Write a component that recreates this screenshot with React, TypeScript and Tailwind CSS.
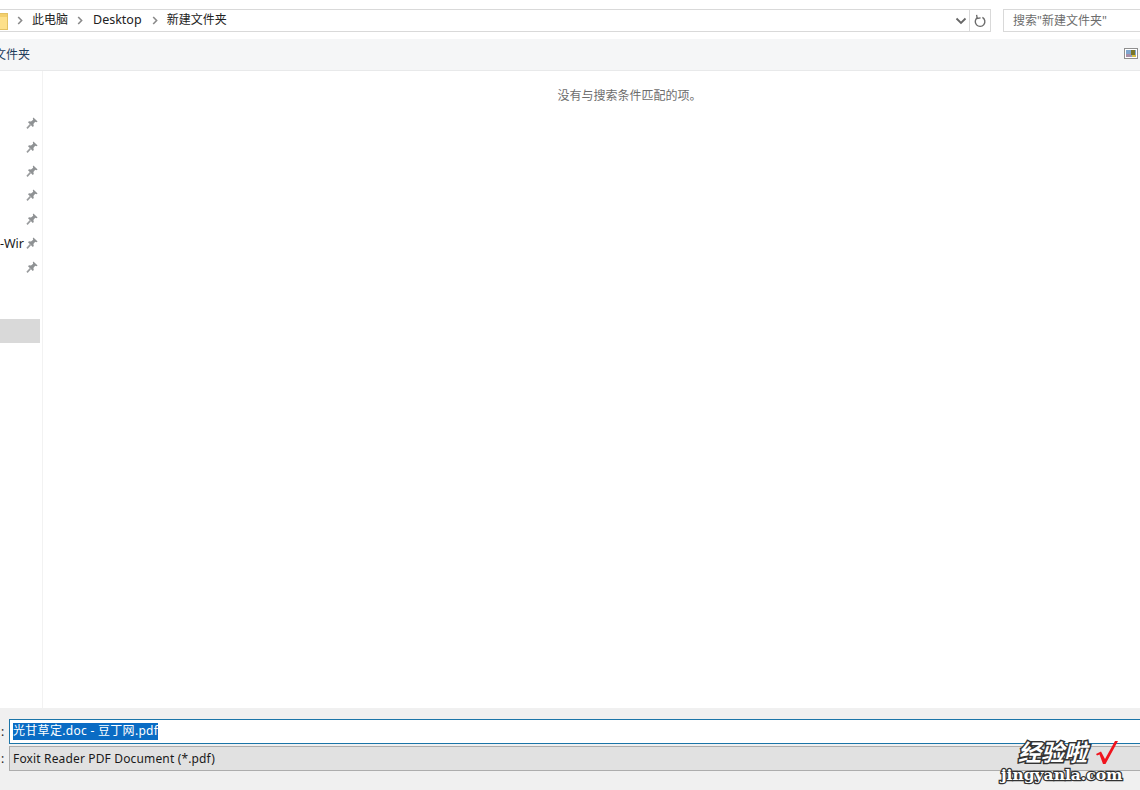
const cjk = "font-['Noto_Sans','Noto_Sans_CJK_SC',sans-serif]";

function Chevron() {
  return (
    <svg width="6" height="9" viewBox="0 0 6 9" className="shrink-0">
      <path d="M1.2 1 L4.6 4.5 L1.2 8" fill="none" stroke="#8a8a8a" strokeWidth="1.6" />
    </svg>
  );
}

function Pin() {
  return (
    <svg width="12" height="12" viewBox="0 0 12 12" className="shrink-0">
      <path d="M7.4 0.4 L11.6 4.4 L10.4 5.2 L9.2 4.8 L7.4 7 L7.8 9 L6.8 10 L2 5.2 L3 4.2 L5 4.6 L7.2 2.8 L6.8 1.4 Z" fill="#8f9294" />
      <path d="M4.4 7.6 L1 11.4" stroke="#9a9c9e" strokeWidth="1.6" fill="none" />
    </svg>
  );
}

function Row({ text }: { text?: string }) {
  return (
    <div className="h-6 flex items-center justify-end pr-[2px]">
      {text && <span className="text-[12.5px] text-[#1a1a1a] mr-[2px] leading-[15px] whitespace-nowrap shrink-0">{text}</span>}
      <Pin />
    </div>
  );
}

export default function App() {
  return (
    <div className={`w-[1140px] h-[790px] relative overflow-hidden flex flex-col bg-white text-[12px] ${cjk}`}>
      {/* address row */}
      <div className="h-[39px] shrink-0 flex items-start pt-[9px] bg-white">
        <div className="w-[991px] h-[23px] border-y border-r border-[#d9d9d9] flex items-center">
          <svg width="8" height="17" viewBox="0 0 8 17" className="shrink-0 mt-[2px]">
            <rect x="-1" y="0.5" width="8.5" height="16" fill="#fde08a" stroke="#e3c163" />
            <rect x="0" y="1" width="7" height="3" fill="#f3cf6b" />
          </svg>
          <div className="ml-[9px]"><Chevron /></div>
          <span className="ml-[9px] text-[#222] -translate-y-[1px]">此电脑</span>
          <div className="ml-[9px]"><Chevron /></div>
          <span className="ml-[10px] text-[#222] text-[12.5px]">Desktop</span>
          <div className="ml-[10px]"><Chevron /></div>
          <span className="ml-[9px] text-[#222] -translate-y-[1px]">新建文件夹</span>
          <div className="flex-1" />
          <svg width="12" height="8" viewBox="0 0 12 8" className="shrink-0 mr-[2px]">
            <path d="M1.5 1.5 L6 6 L10.5 1.5" fill="none" stroke="#666" strokeWidth="1.8" />
          </svg>
          <div className="w-[21px] h-full border-l border-[#d9d9d9] flex items-center justify-center">
            <svg width="12" height="14" viewBox="0 0 12 14">
              <path d="M3.4 3.6 A4.8 4.8 0 1 0 8.4 3.4" fill="none" stroke="#6b6b6b" strokeWidth="1.4" />
              <path d="M2.6 0.8 L3.2 4.4 L6.6 3.8" fill="none" stroke="#6b6b6b" strokeWidth="1.3" />
            </svg>
          </div>
        </div>
        <div className="ml-[12px] flex-1 h-[23px] border-y border-l border-[#d9d9d9] flex items-center pl-[9px] text-[#6d6d6d]">
          <span>搜索"新建文件夹"</span>
        </div>
      </div>

      {/* toolbar */}
      <div className="h-[32px] shrink-0 bg-[#f5f6f7] border-b border-[#e8e9ea] flex items-center justify-between overflow-hidden">
        <span className="-ml-[30px] text-[#1f3d5c]">新建文件夹</span>
        <svg width="14" height="11" viewBox="0 0 14 11" className="mr-[2px] mb-[3px] shrink-0">
          <rect x="0.5" y="0.5" width="13" height="10" fill="#fff" stroke="#8f8f8f" />
          <rect x="2" y="2" width="10" height="7" fill="#7fa6cf" />
          <rect x="7" y="2" width="4" height="5" fill="#7a7628" />
          <rect x="2" y="6" width="5" height="3" fill="#a78fa8" />
          <rect x="8" y="7" width="4" height="2" fill="#d8c04a" />
        </svg>
      </div>

      {/* main */}
      <div className="flex-1 flex min-h-0">
        <div className="w-[43px] shrink-0 border-r border-[#f2f2f2] pr-[2px] overflow-hidden">
          <div className="pt-[40px]">
            <Row />
            <Row />
            <Row />
            <Row />
            <Row />
            <Row text="-Wir" />
            <Row />
          </div>
          <div className="h-6 mt-[40px] bg-[#d9d9d9]" />
        </div>
        <div className="flex-1 flex justify-center pl-[76px] pt-[17px] text-[12px] text-[#6d6d6d] leading-4">
          <span className="h-4">没有与搜索条件匹配的项。</span>
        </div>
      </div>

      {/* bottom */}
      <div className="h-[82px] shrink-0 bg-[#f0f0f0] pt-[11px] flex flex-col gap-[2px]">
        <div className="h-[25px] flex items-center">
          <span className="w-[10px] pl-[1px] text-[#222] shrink-0">:</span>
          <div className="flex-1 -ml-[1px] h-full bg-white border-y border-l border-[#1c75a8] flex items-center pl-[3px] overflow-hidden">
            <span className="bg-[#0a6cc4] text-white h-[17px] leading-[16px] text-[12px] tracking-[0.3px]">光甘草定.doc - 豆丁网.pdf</span>
          </div>
        </div>
        <div className="h-[25px] flex items-center">
          <span className="w-[10px] pl-[1px] text-[#222] shrink-0">:</span>
          <div className="flex-1 -ml-[1px] h-full bg-[#e1e1e1] border-y border-l border-[#adadad] flex items-center pl-[3px] text-[#1a1a1a]">
            <span className="tracking-[0.15px]">Foxit Reader PDF Document (*.pdf)</span>
          </div>
        </div>
      </div>

      {/* watermark */}
      <div className="absolute left-[1001px] top-[738px] w-[123px] flex flex-col">
        <div className="flex items-center h-[29px] pl-[17px]">
          <span className={`text-[23px] font-bold italic text-white leading-none [-webkit-text-stroke:3px_#333] [paint-order:stroke_fill] ${cjk}`}>经验啦</span>
          <svg width="24" height="25" viewBox="0 0 24 25" className="ml-[8px] shrink-0">
            <path d="M1 14 L6 11.5 L10 19 L20 1 L23 1 L10.5 24 L8 24 L4.5 14.5 L2 15.5 Z" fill="#f0141e" />
          </svg>
        </div>
        <span className="text-[15.5px] font-bold text-white leading-none font-['DejaVu_Serif',serif] [-webkit-text-stroke:2.5px_#333] [paint-order:stroke_fill] whitespace-nowrap">jingyanla.com</span>
      </div>
    </div>
  );
}
